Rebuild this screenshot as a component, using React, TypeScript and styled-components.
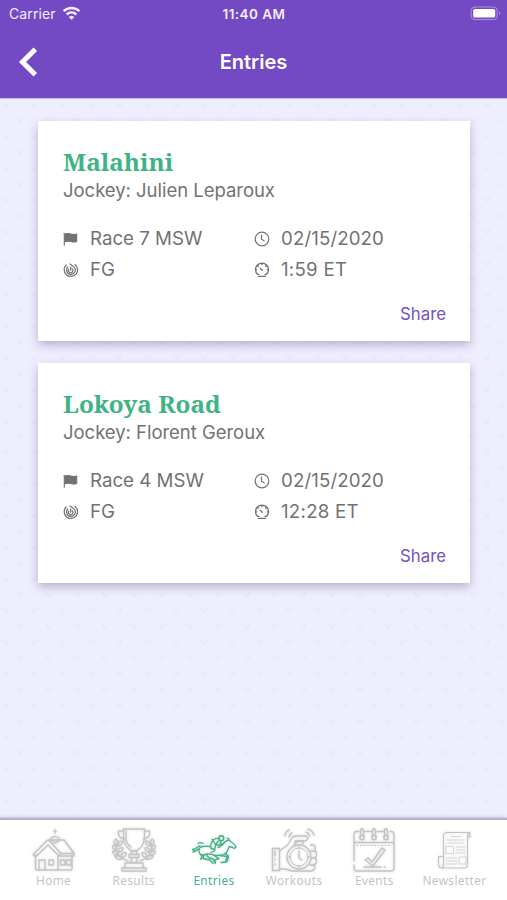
import React from "react";
import styled, { createGlobalStyle } from "styled-components";

const Global = createGlobalStyle`
  * { box-sizing: border-box; }
  body { margin: 0; background: #efeeff; font-family: Inter, "Liberation Sans", sans-serif; }
`;

const tile = encodeURIComponent(
  `<svg xmlns="http://www.w3.org/2000/svg" width="28.3" height="31.6" viewBox="0 0 28.3 31.6"><g fill="none" stroke="#dddbed" stroke-opacity=".36" stroke-width="1.6"><path d="M3 10l1.5 3 2 1 2-4"/><path d="M18 26l1 3 2 1 2-4"/></g></svg>`
);

const Screen = styled.div`
  width: 507px;
  height: 900px;
  display: flex;
  flex-direction: column;
  overflow: hidden;
  background: #efeeff url("data:image/svg+xml,${tile}") 0 -2px;
`;

const Header = styled.header`
  height: 98px;
  flex: none;
  background: #7349c4;
  color: #fff;
  box-shadow: 0 1px 0 #c8bbe9;
`;

const StatusBar = styled.div`
  height: 28px;
  display: grid;
  grid-template-columns: 1fr auto 1fr;
  align-items: center;
  padding: 0 6px 1px 9px;
  font-size: 14px;
  color: #f3edff;
`;

const Carrier = styled.div`
  display: flex;
  align-items: center;
  gap: 6px;
  letter-spacing: 0.1px;
`;

const Clock = styled.div`
  font-weight: 600;
  font-size: 13.5px;
  letter-spacing: 0.45px;
  padding-right: 2px;
`;

const BatterySlot = styled.div`
  display: flex;
  justify-content: flex-end;
`;

const TitleBar = styled.div`
  height: 68px;
  display: grid;
  grid-template-columns: 60px 1fr 60px;
  align-items: center;
`;

const BackButton = styled.button`
  border: 0;
  padding: 0 0 0 18px;
  background: none;
  color: #fff;
  display: flex;
`;

const PageTitle = styled.h1`
  margin: 0;
  text-align: center;
  font-size: 20px;
  font-weight: 600;
  letter-spacing: 0;
`;

const List = styled.main`
  flex: 1;
  display: flex;
  flex-direction: column;
  gap: 22px;
  padding: 23px 37px 0 38px;
`;

const Card = styled.article`
  height: 220px;
  flex: none;
  background: #fff;
  padding: 27px 25px 0;
  box-shadow: 0 4px 9px rgba(70, 65, 110, 0.34);
`;

const HorseName = styled.h2`
  margin: 0;
  height: 29px;
  line-height: 28px;
  font-family: "Noto Serif", "DejaVu Serif Condensed", "DejaVu Serif", serif;
  font-size: 24.3px;
  font-weight: 700;
  color: #3fb383;
  white-space: nowrap;
`;

const Jockey = styled.div`
  height: 26px;
  line-height: 26px;
  font-size: 18.5px;
  letter-spacing: -0.03px;
  color: #727272;
`;

const Facts = styled.div`
  display: grid;
  grid-template-columns: 191px 1fr;
  grid-auto-rows: 31px;
  margin-top: 20px;
`;

const Fact = styled.div<{ $tracking?: number }>`
  display: flex;
  align-items: center;
  gap: 11px;
  font-size: 18.7px;
  letter-spacing: ${(p) => p.$tracking ?? 0}px;
  color: #727272;
  white-space: nowrap;
`;

const Share = styled.button`
  display: block;
  margin: 18px -1px 0 auto;
  padding: 0;
  border: 0;
  background: none;
  font-family: inherit;
  font-size: 16.8px;
  line-height: 22px;
  color: #7551c3;
`;

const TabBar = styled.nav`
  height: 80px;
  flex: none;
  display: grid;
  grid-template-columns: repeat(6, 80.2px);
  padding: 7px 13px 0 13.5px;
  background: #fff;
  box-shadow: 0 -1px 1px 1px #b3b2c9, 0 -3px 3px #c9c8de;
`;

const Tab = styled.a<{ $active?: boolean }>`
  display: flex;
  flex-direction: column;
  align-items: center;
  font-family: "Noto Sans", sans-serif;
  font-size: 11.8px;
  line-height: 14px;
  letter-spacing: 0.4px;
  color: ${(p) => (p.$active ? "#3fb383" : "#c4c4c4")};
`;

const Line = styled.svg`
  display: block;
  flex: none;
  fill: none;
  stroke: currentColor;
  stroke-linecap: round;
  stroke-linejoin: round;
`;

const TabIcon = styled(Line)`
  filter: drop-shadow(0 0 1.5px rgba(120, 120, 120, 0.28));
`;

const FlagIcon = () => (
  <Line width="16" height="16" viewBox="0 0 16 16" strokeWidth="1.1">
    <path d="M1.3 2.2v12" />
    <path d="M2 3c3-.8 4.6-.5 6 .1 2 .7 3.8.6 5.7 0v7.5c-2 .7-3.8.6-5.7 0-2-.7-4-.4-6 .2z" fill="currentColor" />
  </Line>
);
const TrackIcon = () => (
  <Line width="16" height="16" viewBox="0 0 16 16" strokeWidth="1.25">
    <path d="M3.2 3A6.7 6.7 0 1 0 12 2.5" />
    <path d="M4.8 5A4.4 4.4 0 1 0 10.4 4.4L7 2" />
    <path d="M5.6 7.4A2.3 2.3 0 1 0 9.3 6.8M7.7 5v3.2" />
  </Line>
);
const TimeIcon = () => (
  <Line width="16" height="16" viewBox="0 0 16 16" strokeWidth="1.2">
    <circle cx="8" cy="8" r="6.8" />
    <path d="M7.5 4v4.3l2.6 1.4" />
  </Line>
);
const GaugeIcon = () => (
  <Line width="16" height="16" viewBox="0 0 16 16" strokeWidth="1.3">
    <path d="M3.5 12.3a6.5 6.5 0 1 1 9 0M4.3 14.3h7.4M3.5 12.3h1.6M12.5 12.3h-1.6M8 1.5v1.3M1.5 7.8h1.2M13.3 7.8h1.2M3.5 3.5l.8.8M12.5 3.5l-.8.8M6.2 6.2l2 2" />
  </Line>
);

const HomeIcon = () => (
  <TabIcon width="46" height="46" viewBox="0 0 46 46" strokeWidth="1.4">
    <path d="M4.5 28v13.5q0 1.5 2 1.5h33q1.5 0 1.5-1.5V29M27 28v15" />
    <path d="M2 27.5 15.5 14q1.5-1.5 3 0L30 26.5l-2 2.5-11-11L4.5 30zM17 13h16l10 13v3H29M33 13l10 13.5H30" />
    <path d="M8 43V33h6v10M18 33h4.5v5H18zM29.5 33H34v5h-4.5zM35.5 33H40v5h-4.5z" />
    <path d="M20 13v-2c1.5-1.8 6.5-1.8 8 0v3l-4 2.2z" />
    <path d="M24 7V2M22.5 4.5h3" strokeWidth="1" />
  </TabIcon>
);
const TrophyIcon = () => (
  <TabIcon width="46" height="46" viewBox="0 0 46 46" strokeWidth="1.4">
    <path d="M12.5 2h21v8c0 7-4 12-8.5 14h-4c-4.5-2-8.5-7-8.5-14zM12 4H7.5c-1 4 1.5 8 6 8M34 4h4.5c1 4-1.5 8-6 8" />
    <path d="M15 4v7c0 4 2 7 5 9M20.5 24h5v3.5h-5zM18 27.5h10v3H18zM21 30.5l-1.5 5h7l-1.5-5M14 36h18v5H14zM11 41h24v3H11z" />
    <path d="M7 14C3 22 6 30 17 34M39 14c4 8 1 16-10 20" />
    {[0, 1].map((i) => (
      <g key={i} transform={i ? "matrix(-1 0 0 1 46 0)" : undefined}>
        <path d="M6 18c-4-2-4-4-1-6 2 2 2 4 1 6zM5.5 23c-4-1-5-3-3-5 3 1 4 3 3 5zM7 28c-4 0-6-2-5-4 4 0 5 2 5 4zM11 32c-4 1-6 0-7-3 4-1 6 0 7 3zM7 19c0-3 2-5 4-5 1 3-1 5-4 5zM7 25c1-4 3-5 5-4 0 3-2 4-5 4zM10 30c0-4 3-5 5-4 0 3-2 5-5 4z" />
      </g>
    ))}
  </TabIcon>
);
const HorseIcon = () => (
  <TabIcon width="46" height="46" viewBox="0 0 46 46" strokeWidth="1.35">
    <path d="M10 20c3-1.5 6-.5 9-.5M27 20.5c3-.3 5-3 7-5.5 1.5-1.5 3-2 4.5-2l1 1.5c2.5 1.2 4.5 3.2 5.5 5.2-.5 1.8-2 1.8-3 1l-3.5-1.2c-1.5 2-1.5 4.5-3.5 6.5" />
    <path d="M10 20c-3 1.5-2.5 5-1 7 2 2 4.5 1 7 0 3.5-1 6 1.5 10 1.5 3 0 6-.2 9-2" />
    <path d="M9 19c-3 0-3 3-7.5 3.5 2 .3 2 1 .5 2.5 3 0 3-2.5 6-3M7 16.5c1.5-1 3.5-1 5 0" />
    <path d="M10 27.5c1.5 2 .5 4-.5 5M13 28l-1 3.5 7 1.5 3 3.5M16 28.5l1.5 2 4.5 1.5 2 4M23 28.5l5 3-4.5 1.5 1 3M29 28.5l7 1-1.5 5.5-4.5.5M34 26.5l3.5 2.5-1 5-1.5 1" />
    <circle cx="30.3" cy="11.2" r="2.5" />
    <path d="M28 11.5c-3-.5-6 1-7.5 4-1 2-1 4-.5 6l3.5 1M27.5 14l-3 3.5 4 1 4-2.5M24.5 18.5l-1 5.5-3.5 1.5M21 12l3 5M30 14l-1 4M38 12l-2-1" />
  </TabIcon>
);
const StopwatchIcon = () => (
  <TabIcon width="46" height="46" viewBox="0 0 46 46" strokeWidth="1.4">
    <path d="M1.5 21.5h7v22h-7zM4 24v5M4 32v1M4 37v1M8.5 24l8-6 5-8c1.5-1.5 7-1 13-1 3 0 3 4 0 5h-8l-4 5" />
    <path d="M8.5 42h6l6 2h20c4-1 4-5 2-6 4-1 4-6 1-7 3-2 3-6 0-7 2-4 0-7-4-6" />
    <circle cx="28" cy="30" r="12" />
    <circle cx="28" cy="30" r="9" strokeWidth="1" />
    <path d="M28 24v7l3 2M24 17v-3h8v3M28 20v1M28 39v1M18 30h1M37 30h1M38 24h5M40 31h4M39 38h4" />
    <path d="M14 9c0-3 2-5 4-6M18 10c0-2 1-3 3-4M37 2c3 1 5 3 6 6M35 5c2 1 3 2 4 4" />
  </TabIcon>
);
const CalendarIcon = () => (
  <TabIcon width="46" height="46" viewBox="0 0 46 46" strokeWidth="1.4">
    <path d="M8 4.5H4.5Q3 5 3 8v26M3 38v2.5Q3 44 6 44h34q3 0 3-3V8q0-3.5-3-3.5h-1M14 4.5h6.5M26 4.5h6.5M3 15.5h40" />
    <path d="M6 18.5h35" strokeWidth="1" strokeDasharray="1 2.5" />
    <path d="M9.5 10V4c0-3 3-3 3 0v6M21.5 10V4c0-3 3-3 3 0v6M33.5 10V4c0-3 3-3 3 0v6" />
    <circle cx="11" cy="10.5" r="2.3" />
    <circle cx="23" cy="10.5" r="2.3" />
    <circle cx="35" cy="10.5" r="2.3" />
    <path d="m14 33 3-2 4 4 10-14 3 2-12 16zM13 40h17M33 40h1" />
  </TabIcon>
);
const NewspaperIcon = () => (
  <TabIcon width="46" height="46" viewBox="0 0 46 46" strokeWidth="1.1">
    <path d="M11.5 29V9q0-3.5 3.5-3.5h23q-2.5 1-2.5 4V37q0 4-3 4H10q-3.500 0-3.500-4v-7.500h5V37q0 4-2.500 4M35.500 10H38V7q0-1.500-1.500-1.500" />
    <path d="M19 9.500h10M15 13h17M15 16h17M24 20h9M24 23h9M24 26h9M14 31h11M14 34h11M14 37h11M14 19.500h7.500v7H14zM27.500 30H34v7h-6.500z" strokeWidth=".65" />
  </TabIcon>
);

const entries = [
  { name: "Malahini", jockey: "Julien Leparoux", race: "Race 7 MSW", date: "02/15/2020", track: "FG", time: "1:59 ET" },
  { name: "Lokoya Road", jockey: "Florent Geroux", race: "Race 4 MSW", date: "02/15/2020", track: "FG", time: "12:28 ET" },
];

const tabs = [
  { label: "Home", Icon: HomeIcon },
  { label: "Results", Icon: TrophyIcon },
  { label: "Entries", Icon: HorseIcon },
  { label: "Workouts", Icon: StopwatchIcon },
  { label: "Events", Icon: CalendarIcon },
  { label: "Newsletter", Icon: NewspaperIcon },
];

export default function App() {
  return (
    <Screen>
      <Global />
      <Header>
        <StatusBar>
          <Carrier>
            Carrier
            <Line width="19" height="15" viewBox="0 0 19 15" strokeWidth="2.4">
              <path d="M1.6 5.2c4.600-4.300 11.200-4.300 15.800 0M4.700 8.500c2.900-2.600 6.700-2.600 9.600 0" strokeLinecap="butt" />
              <path d="M9.500 13.400 7.200 11q2.300-1.800 4.600 0z" fill="currentColor" strokeWidth=".6" />
            </Line>
          </Carrier>
          <Clock>11:40 AM</Clock>
          <BatterySlot>
            <Line width="31" height="15" viewBox="0 0 31 15">
              <rect x="1.2" y="1" width="26" height="12.6" rx="3.5" stroke="#ac91df" />
              <rect x="3.2" y="3" width="22" height="8.6" rx="1.6" fill="#fff" stroke="none" />
              <path d="M29 5.500q2.200 1.800 0 3.600z" fill="#ac91df" stroke="none" />
            </Line>
          </BatterySlot>
        </StatusBar>
        <TitleBar>
          <BackButton aria-label="Back">
            <Line width="22" height="32" viewBox="0 0 22 32" strokeWidth="5">
              <path d="M17.300 3.200 4.500 16l12.800 12.800" strokeLinecap="butt" strokeLinejoin="miter" />
            </Line>
          </BackButton>
          <PageTitle>Entries</PageTitle>
        </TitleBar>
      </Header>
      <List>
        {entries.map((e) => (
          <Card key={e.name}>
            <HorseName>{e.name}</HorseName>
            <Jockey>Jockey: {e.jockey}</Jockey>
            <Facts>
              <Fact><FlagIcon />{e.race}</Fact>
              <Fact $tracking={0.1}><TimeIcon />{e.date}</Fact>
              <Fact><TrackIcon />{e.track}</Fact>
              <Fact $tracking={0.25}><GaugeIcon />{e.time}</Fact>
            </Facts>
            <Share>Share</Share>
          </Card>
        ))}
      </List>
      <TabBar>
        {tabs.map(({ label, Icon }) => (
          <Tab key={label} $active={label === "Entries"}>
            <Icon />
            {label}
          </Tab>
        ))}
      </TabBar>
    </Screen>
  );
}
